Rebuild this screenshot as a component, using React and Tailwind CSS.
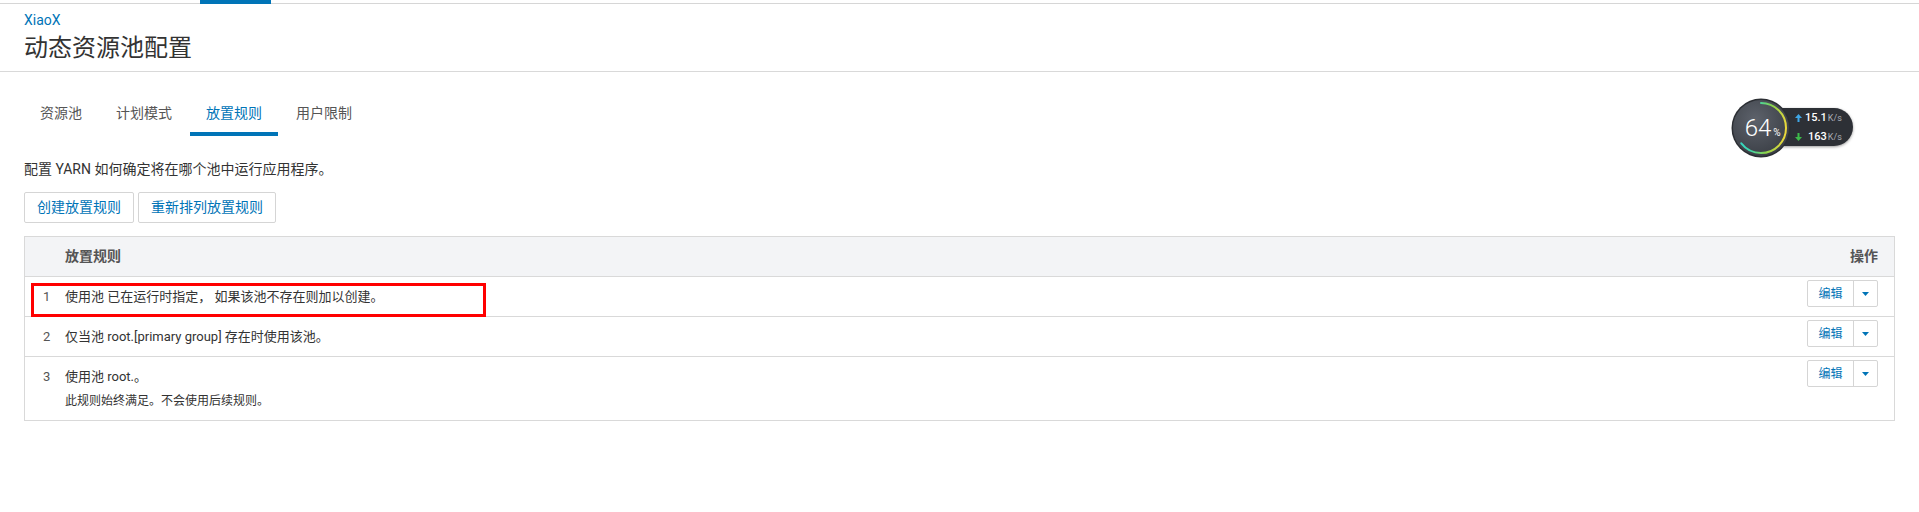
import React from "react";

const FONT = "font-['Roboto','Noto_Sans_CJK_SC',sans-serif]";

function Gauge() {
  const r = 25;
  const c = 2 * Math.PI * r;
  const pct = 0.64;
  return (
    <div className="absolute left-[1731px] top-[98px] flex items-center">
      <div className="absolute left-[44px] top-[10px] w-[78px] h-[38px] rounded-r-full bg-[#2d3036] shadow-[0_1px_3px_rgba(0,0,0,0.4)] flex flex-col justify-center pl-[20px] gap-[5px]">
        <div className="flex items-baseline gap-[3px] leading-[14px]">
          <svg width="7" height="8" viewBox="0 0 7 8" className="self-center">
            <path d="M3.5 0 L7 4 L4.5 4 L4.5 8 L2.5 8 L2.5 4 L0 4 Z" fill="#3ea6e6" />
          </svg>
          <span className="text-[11px] font-medium text-white">15.1</span>
          <span className="text-[9px] text-[#a9adb5] -ml-[2px]">K/s</span>
        </div>
        <div className="flex items-baseline gap-[3px] leading-[14px]">
          <svg width="7" height="8" viewBox="0 0 7 8" className="self-center">
            <path d="M3.5 8 L7 4 L4.5 4 L4.5 0 L2.5 0 L2.5 4 L0 4 Z" fill="#3dbb4a" />
          </svg>
          <span className="text-[11px] font-medium text-white ml-[3px]">163</span>
          <span className="text-[9px] text-[#a9adb5] -ml-[2px]">K/s</span>
        </div>
      </div>
      <svg width="60" height="60" viewBox="0 0 60 60" className="relative">
        <defs>
          <radialGradient id="gbg" cx="40%" cy="35%" r="70%">
            <stop offset="0%" stopColor="#5d626b" />
            <stop offset="100%" stopColor="#3a3e45" />
          </radialGradient>
          <linearGradient id="garc" x1="0.5" y1="0" x2="0.35" y2="1">
            <stop offset="0%" stopColor="#2fd8d0" />
            <stop offset="35%" stopColor="#3fd6a8" />
            <stop offset="65%" stopColor="#8ad24a" />
            <stop offset="100%" stopColor="#f0d83a" />
          </linearGradient>
        </defs>
        <circle cx="30" cy="30" r="29.5" fill="#2b2e33" />
        <circle cx="30" cy="30" r="28" fill="url(#gbg)" />
        <circle
          cx="30"
          cy="30"
          r={r}
          fill="none"
          stroke="url(#garc)"
          strokeWidth="2"
          strokeDasharray={`${c * pct} ${c}`}
          transform="rotate(-90 30 30)"
          strokeLinecap="round"
        />
        <text x="27" y="38" textAnchor="middle" fill="#ffffff" fontSize="24" fontWeight="300" fontFamily="Roboto, sans-serif">64</text>
        <text x="46" y="38" textAnchor="middle" fill="#ffffff" fontSize="10" fontFamily="Roboto, sans-serif">%</text>
      </svg>
    </div>
  );
}

function EditButton() {
  return (
    <div className="flex h-[27px] border border-[#d5d5d5] rounded-[2px] bg-white">
      <div className="w-[46px] flex items-center justify-center text-[12px] text-[#0074b7] border-r border-[#d5d5d5]">编辑</div>
      <div className="w-[23px] flex items-center justify-center">
        <svg width="7" height="4" viewBox="0 0 7 4">
          <path d="M0 0 L7 0 L3.5 4 Z" fill="#0074b7" />
        </svg>
      </div>
    </div>
  );
}

function Row({ num, children, tall }) {
  return (
    <div className={`flex border-t border-[#d9d9d9] ${tall ? "h-[64px]" : "h-[40px]"}`}>
      <div className="w-[40px] pl-[18px] pt-[10px] text-[13px] leading-[20px] text-[#555]">{num}</div>
      <div className="flex-1 pt-[10px] text-[13px] leading-[20px] text-[#333]">{children}</div>
      <div className="pt-[3px] pr-[16px]">
        <EditButton />
      </div>
    </div>
  );
}

export default function App() {
  const tabs = ["资源池", "计划模式", "放置规则", "用户限制"];
  return (
    <div className={`relative w-[1919px] h-[512px] bg-white overflow-hidden ${FONT}`}>
      <div className="flex h-[4px]">
        <div className="w-[200px] border-b border-[#d6d6d6]" />
        <div className="w-[71px] bg-[#0074b7]" />
        <div className="flex-1 border-b border-[#d6d6d6]" />
      </div>
      <div className="px-[24px] pt-[8px] pb-[7px] border-b border-[#d9d9d9]">
        <div className="text-[14px] leading-[16px] text-[#0074b7]">XiaoX</div>
        <div className="mt-[4px] text-[24px] leading-[32px] text-[#333]">动态资源池配置</div>
      </div>

      <div className="px-[24px]">
        <div className="flex gap-[2px] mt-[31px]">
          {tabs.map((t, i) => (
            <div
              key={t}
              className={`px-[16px] pb-[9px] border-b-4 text-[14px] leading-[20px] ${
                i === 2 ? "border-[#0074b7] text-[#0074b7]" : "border-transparent text-[#555]"
              }`}
            >
              {t}
            </div>
          ))}
        </div>

        <div className="mt-[23px] text-[14px] leading-[20px] text-[#333]">配置 YARN 如何确定将在哪个池中运行应用程序。</div>

        <div className="flex gap-[4px] mt-[13px]">
          <div className="h-[31px] px-[12px] flex items-center border border-[#d5d5d5] rounded-[2px] text-[14px] text-[#0074b7]">创建放置规则</div>
          <div className="h-[31px] px-[12px] flex items-center border border-[#d5d5d5] rounded-[2px] text-[14px] text-[#0074b7]">重新排列放置规则</div>
        </div>

        <div className="relative mt-[13px] border border-[#d9d9d9]">
          <div className="flex h-[39px] items-center bg-[#f3f4f6] text-[14px] font-semibold text-[#555]">
            <div className="w-[40px]" />
            <div className="flex-1">放置规则</div>
            <div className="pr-[16px]">操作</div>
          </div>
          <Row num="1">使用池 已在运行时指定， 如果该池不存在则加以创建。</Row>
          <Row num="2">仅当池 root.[primary group] 存在时使用该池。</Row>
          <Row num="3" tall>
            <div>使用池 root.。</div>
            <div className="mt-[4px] text-[12px] leading-[20px] text-[#333]">此规则始终满足。不会使用后续规则。</div>
          </Row>
          <div className="absolute left-[6px] top-[46px] w-[455px] h-[34px] border-[3px] border-[#ff0000]" />
        </div>
      </div>

      <Gauge />
    </div>
  );
}
